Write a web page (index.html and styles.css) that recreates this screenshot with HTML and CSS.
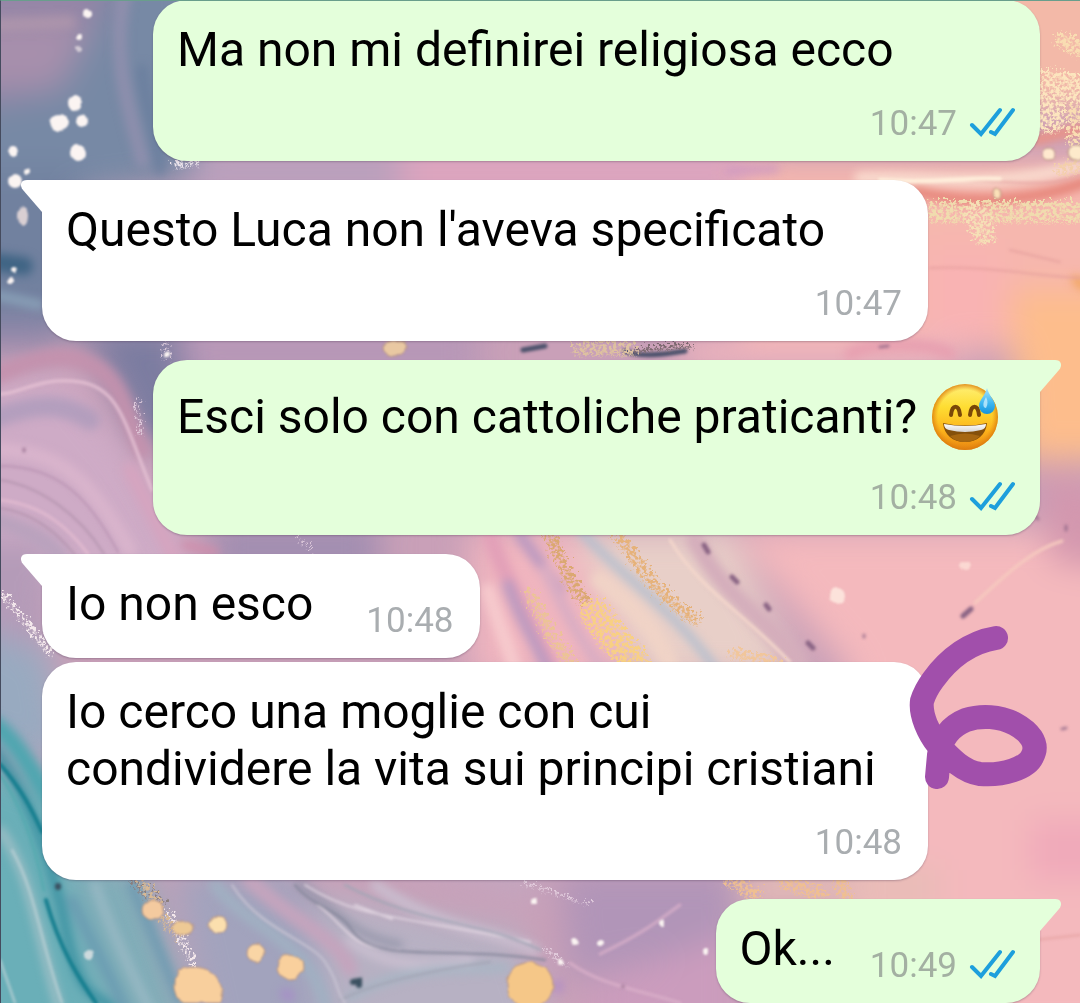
FILE: index.html
```
<!DOCTYPE html>
<html lang="it">

<head>
    <meta charset="UTF-8">
    <meta name="viewport" content="width=device-width, initial-scale=1">
    <title>Chat</title>
    <link rel="stylesheet" href="styles.css">
</head>

<body>
    <!-- marble wallpaper -->
    <svg class="wallpaper" viewBox="0 0 1080 1003" preserveAspectRatio="xMidYMid slice" color-interpolation-filters="sRGB" aria-hidden="true">
        <defs>
            <filter id="soft" x="-30%" y="-30%" width="160%" height="160%"><feGaussianBlur stdDeviation="16"/></filter>
            <filter id="mid" x="-20%" y="-20%" width="140%" height="140%"><feGaussianBlur stdDeviation="5"/></filter>
            <filter id="fine" x="-20%" y="-20%" width="140%" height="140%"><feGaussianBlur stdDeviation="1.5"/></filter>
            <filter id="glitter" x="-20%" y="-20%" width="140%" height="140%">
                <feTurbulence type="fractalNoise" baseFrequency="0.3" numOctaves="2" seed="4" result="n"/>
                <feDisplacementMap in="SourceGraphic" in2="n" scale="22" xChannelSelector="R" yChannelSelector="G" result="d"/>
                <feColorMatrix in="n" type="matrix" values="0 0 0 0 1  0 0 0 0 1  0 0 0 0 1  0 5 0 0 -1.9" result="m"/>
                <feComposite in="d" in2="m" operator="in"/>
                <feGaussianBlur stdDeviation=".6"/>
            </filter>
            <filter id="rough" x="-20%" y="-20%" width="140%" height="140%">
                <feTurbulence type="fractalNoise" baseFrequency="0.1" numOctaves="1" seed="8" result="n"/>
                <feDisplacementMap in="SourceGraphic" in2="n" scale="5" xChannelSelector="R" yChannelSelector="G"/>
                <feGaussianBlur stdDeviation=".8"/>
            </filter>
        </defs>
        <rect width="1080" height="1003" fill="#c9a0b8"/>

        <!-- colour fields -->
        <g filter="url(#soft)">
            <path fill="#9385a6" d="M-50-50H200V160H-50Z"/>
            <path fill="#a78fac" d="M-40 20H90V90H-40Z"/>
            <path fill="#7789a5" d="M-50 115L60 90 130-40H200V180L60 200-50 190Z"/>
            <path fill="#71819f" d="M-50 170H80V330H-50Z"/>
            <path fill="#8d86a8" d="M-50 315H60V350H-50Z"/>
            <path fill="#7b7ca0" d="M70 325H200L190 450 140 440 105 370Z"/>
            <path fill="#b697b7" d="M180 325H480V380H180Z"/>
            <path fill="#b8a0bd" d="M190 150H420V195H190Z"/>
            <path fill="#dfa5bf" d="M400 150H760V195H400Z"/>
            <path fill="#f3b9a8" d="M900-40H1120V110H900Z"/>
            <path fill="#f6b7ae" d="M740 160H1120V350H740Z"/>
            <path fill="#fdbd8c" d="M1010 290H1120V460H1020Z"/>
            <path fill="#f9b3b3" d="M925 250H1005V340H925Z"/>
            <path fill="#eeb4bd" d="M680 335H960V370H680Z"/>
            <path fill="#ceabc6" d="M-50 380L70 375 130 450 220 600 20 590-50 580Z"/>
            <path fill="#9d8cb0" d="M210 525H380V570H210Z"/>
            <path fill="#b49bb8" d="M-50 540H50V640H-50Z"/>
            <path fill="#f0b5bf" d="M470 530H620V680H470Z"/>
            <path fill="#e8cfc8" d="M570 530H730L800 680H640Z"/>
            <path fill="#f4b9bd" d="M730 530H1120V1040H850V670Z"/>
            <path fill="#d397ae" d="M1040 470L1110 490V570L1050 560Z"/>
            <path fill="#f0a9ba" d="M1030 820H1120V880H1030Z"/>
            <path fill="#98aac0" d="M-60 620L50 650 70 770-60 730Z"/>
            <path fill="#6aafb8" d="M-60 740L60 790 180 1050H-60Z"/>
            <path fill="#80adb8" d="M60 860H140L200 1050H120Z"/>
            <path fill="#a2a3bd" d="M170 870H300L350 1050H210Z"/>
            <path fill="#b7b1c3" d="M310 890L520 930 560 1050H330Z"/>
            <path fill="#b195b8" d="M560 870H740V940L570 980Z"/>
            <path fill="#cb9cbd" d="M740 930V1050H590V985Z"/>
            <path fill="#c3a6bf" d="M360 860H540V905Z"/>
            <path fill="#e6bdb6" d="M740 870H940V905H740Z"/>
        </g>

        <!-- broad veins -->
        <g fill="none" stroke-linecap="round" filter="url(#mid)">
            <path stroke="#9c93b2" stroke-width="14" d="M125-10C110 60 130 110 142 160" opacity=".6"/>
            <path stroke="#64799b" stroke-width="12" d="M142 70C145 110 160 140 160 170" opacity=".6"/>
            <path stroke="#b39aad" stroke-width="12" d="M-5 25L70 22" opacity=".7"/>
            <path stroke="#3f6484" stroke-width="18" d="M-5 262L24 266"/>
            <path stroke="#8ca5bb" stroke-width="8" d="M-5 295L40 305"/>
            <path stroke="#c491ad" stroke-width="18" d="M-5 376C30 360 60 350 90 364S125 410 142 450" opacity=".9"/>
            <path stroke="#ad9bbb" stroke-width="20" d="M-5 418C30 405 60 400 90 420" opacity=".8"/>
            <path stroke="#d9b4cc" stroke-width="14" d="M-5 450C60 450 90 480 130 550"/>
            <path stroke="#d5a4bf" stroke-width="14" d="M130 470L175 560"/>
            <path stroke="#d08ca9" stroke-width="8" d="M185 545L215 552"/>
            <path stroke="#b9a2bd" stroke-width="16" d="M-5 520C30 530 50 545 60 556"/>
            <path stroke="#e2a0b8" stroke-width="16" d="M490 535C505 580 530 620 550 665"/>
            <path stroke="#bc9ac0" stroke-width="12" d="M508 585C520 620 535 640 548 670M520 535L560 590"/>
            <path stroke="#d9adc3" stroke-width="12" d="M545 570C565 610 580 640 600 665"/>
            <path stroke="#f6cacd" stroke-width="14" d="M488 590C500 630 510 650 515 670"/>
            <path stroke="#b6bfce" stroke-width="9" d="M580 530C620 575 670 605 715 668"/>
            <path stroke="#f0d3c6" stroke-width="18" d="M600 580C640 610 660 640 670 665"/>
            <path stroke="#d4adbb" stroke-width="18" d="M695 540C725 600 775 625 800 665"/>
            <path stroke="#f9dccf" stroke-width="12" d="M860 178C930 175 990 190 1080 166"/>
            <path stroke="#e37c70" stroke-width="9" d="M915 191C970 206 1040 200 1085 182"/>
            <path stroke="#ed9080" stroke-width="10" d="M1035 140L1085 128"/>
            <path stroke="#efa253" stroke-width="8" d="M1076 280L1084 286"/>
            <path stroke="#c491c6" stroke-width="8" d="M730 171L775 169" opacity=".7"/>
            <path stroke="#e79fb0" stroke-width="12" d="M850 354C870 342 930 342 950 354"/>
            <path stroke="#4fa6b0" stroke-width="18" d="M-5 725C20 745 30 770 50 800"/>
            <path stroke="#368fa0" stroke-width="8" d="M-5 750C20 780 50 850 66 930S100 990 112 1010"/>
            <path stroke="#a3c0c7" stroke-width="8" d="M0 830C30 870 36 930 60 1010"/>
            <path stroke="#a4bfca" stroke-width="9" d="M95 885C110 930 135 980 150 1010" opacity=".7"/>
            <path stroke="#6797b0" stroke-width="10" d="M72 900C90 940 115 985 125 1010M132 885L180 1000" opacity=".8"/>
            <path stroke="#a0b0c2" stroke-width="12" d="M215 885C250 930 310 940 325 1005"/>
            <path stroke="#c4a4bd" stroke-width="16" d="M250 880C290 920 335 935 350 968"/>
            <path stroke="#8d90a4" stroke-width="6" d="M300 885C350 920 350 935 400 945"/>
            <path stroke="#cabfd0" stroke-width="10" d="M375 885C440 930 490 930 535 950M350 940C390 970 430 966 470 960"/>
            <path stroke="#a9b5c4" stroke-width="10" d="M350 998C400 965 460 970 505 968"/>
            <path stroke="#aa85cc" stroke-width="10" d="M558 985V988M285 994L290 996" opacity=".7"/>
        </g>

        <!-- thin veins -->
        <g fill="none" stroke-linecap="round" filter="url(#fine)">
            <path stroke="#e3bfd2" stroke-width="3" d="M0 394C20 394 40 376 80 382S125 425 152 490"/>
            <path stroke="#b791b0" stroke-width="2" d="M0 466C60 466 90 500 118 552" opacity=".8"/>
            <path stroke="#b091ab" stroke-width="2" d="M0 480C40 486 80 515 104 554M0 508C30 512 55 530 75 555" opacity=".8"/>
            <path stroke="#e0b9cf" stroke-width="3" d="M0 500C45 505 70 530 88 554"/>
            <path stroke="#147d8e" stroke-width="4" d="M0 764C22 790 32 810 42 832M46 900C60 950 80 980 96 1003"/>
            <path stroke="#57aab0" stroke-width="3" d="M0 775C25 810 38 860 44 890"/>
            <path stroke="#bdd2d6" stroke-width="2" d="M12 850C35 890 40 940 62 1003M0 960L15 1003"/>
            <path stroke="#dfd3df" stroke-width="2" d="M305 885C360 920 400 915 530 942M355 905L392 919M318 905C350 930 350 950 400 950"/>
            <path stroke="#85869a" stroke-width="2" d="M295 885C310 905 340 910 352 930C375 965 450 945 545 960"/>
            <path stroke="#a3a5b5" stroke-width="2" d="M345 885C420 925 480 920 540 950M340 1000C370 985 420 972 490 962"/>
            <path stroke="#c9c4d3" stroke-width="2" d="M232 885C260 930 310 940 325 962S335 990 345 1003"/>
            <path stroke="#dcb2ca" stroke-width="3" d="M600 954C650 930 665 915 680 905M570 963C600 985 640 990 680 1003" opacity=".8"/>
            <path stroke="#f3d6cb" stroke-width="3" d="M670 540C700 590 740 610 790 662"/>
            <path stroke="#f6cabf" stroke-width="3" d="M1062 541C1030 550 1000 580 975 603"/>
            <path stroke="#e39c9b" stroke-width="2" d="M930 268C980 265 1030 275 1080 278M1010 250L1060 262M1035 940L1080 935M960 180C1020 182 1050 188 1080 175" opacity=".7"/>
            <path stroke="#fff0dc" stroke-width="4" d="M880 180C940 184 960 177 1000 179"/>
            <path stroke="#4b516b" stroke-width="5" d="M523 350L545 346M625 351C640 357 660 355 685 351"/>
        </g>

        <!-- gold and silver glitter -->
        <g fill="none" stroke-linecap="round" filter="url(#glitter)">
            <path stroke="#dba871" stroke-width="12" d="M550 533C560 570 580 600 620 650L645 668"/>
            <path stroke="#f8d083" stroke-width="30" d="M595 615L640 672"/>
            <path stroke="#e6b27a" stroke-width="12" d="M615 533C640 565 660 600 695 620"/>
            <path stroke="#ecc396" stroke-width="12" d="M530 595C545 630 560 650 575 668"/>
            <path stroke="#f1c69b" stroke-width="12" d="M735 655L775 664"/>
            <path stroke="#f0dcae" stroke-width="20" d="M935 212H1080M935 214H1080"/>
            <path stroke="#f5e0b6" stroke-width="24" d="M975 216L985 235"/>
            <path stroke="#fce5be" stroke-width="30" d="M1052 85L1080 92M1050 105V120"/>
            <path stroke="#f9ddb2" stroke-width="18" d="M1064 42L1080 50M1075 115V140"/>
            <path stroke="#f3cfab" stroke-width="14" d="M1062 170L1080 168"/>
            <path stroke="#dec1a0" stroke-width="14" d="M580 350H630"/>
            <path stroke="#7d6a70" stroke-width="6" d="M640 351L690 347"/>
            <path stroke="#efbf91" stroke-width="13" d="M730 882L755 895M785 884L820 896M840 884L845 896"/>
            <path stroke="#8b7e7e" stroke-width="12" d="M135 880L160 905"/>
            <path stroke="#d8b994" stroke-width="8" d="M140 880L160 910M165 920L180 940"/>
            <path stroke="#f4e8ec" stroke-width="6" d="M2 595L20 615 50 655M170 915L195 970"/>
            <path stroke="#ece4ec" stroke-width="9" d="M178 165L195 162"/>
            <path stroke="#e9d5e4" stroke-width="3" d="M138 400L140 435M166 345V360M300 538L310 552M545 950L565 965M525 885L590 905" opacity=".8"/>
        </g>

        <!-- gold drops -->
        <g filter="url(#rough)" stroke="#b7937f" stroke-width="1">
            <ellipse cx="153" cy="910" rx="11" ry="10" fill="#f4ca9f"/>
            <ellipse cx="183" cy="928" rx="10" ry="7" fill="#edc995"/>
            <circle cx="218" cy="925" r="9" fill="#fbdfae"/>
            <circle cx="256" cy="953" r="9" fill="#f9d5a5"/>
            <circle cx="290" cy="967" r="13" fill="#f9d09d"/>
            <path fill="#f8cf9d" d="M178 970Q200 962 214 975 226 990 221 1003H182Q170 990 178 970Z"/>
            <circle cx="530" cy="985" r="23" fill="#f5c788"/>
            <ellipse cx="395" cy="348" rx="12" ry="8" fill="#e9c8a2"/>
            <circle cx="1049" cy="154" r="6" fill="#ffe9cf"/>
            <circle cx="997" cy="194" r="5" fill="#fbe0b8"/>
            <circle cx="1076" cy="153" r="8" fill="#fdeacb"/>
        </g>

        <!-- pale drops -->
        <g fill="#fbf4f2" filter="url(#rough)">
            <ellipse cx="75" cy="103" rx="7" ry="8"/>
            <ellipse cx="59" cy="123" rx="10" ry="8"/>
            <circle cx="82" cy="121" r="6"/>
            <circle cx="78" cy="153" r="8"/>
            <circle cx="13" cy="152" r="5"/>
            <circle cx="15" cy="181" r="7"/>
            <circle cx="27" cy="171" r="3"/>
            <ellipse cx="23" cy="216" rx="5" ry="9" fill="#d9cfd3"/>
            <circle cx="87" cy="14" r="4"/>
            <circle cx="79" cy="37" r="3"/>
            <circle cx="79" cy="49" r="3" opacity=".6"/>
            <circle cx="14" cy="269" r="3"/>
            <circle cx="11" cy="281" r="3"/>
            <circle cx="837" cy="596" r="8" fill="#fce2db"/>
            <circle cx="965" cy="566" r="5" fill="#fbd8d2"/>
            <circle cx="89" cy="955" r="5" fill="#cddadd"/>
            <circle cx="168" cy="354" r="3"/>
            <circle cx="575" cy="941" r="3"/>
            <circle cx="601" cy="943" r="3"/>
            <circle cx="662" cy="923" r="3"/>
            <circle cx="534" cy="901" r="3"/>
            <circle cx="705" cy="951" r="3"/>
            <circle cx="560" cy="962" r="3"/>
        </g>

        <!-- dark flecks -->
        <g fill="none" stroke="#8a6484" stroke-width="5" stroke-linecap="round" filter="url(#fine)">
            <path d="M732 577L737 582M766 605L769 609M808 643L813 648M963 616L971 609M704 545L708 552"/>
            <path stroke-width="3" opacity=".7" d="M864 635V637M1066 526V530M1036 517L1038 519M24 449V451M623 986V987M880 347L888 346M1062 729L1066 728"/>
            <path stroke="#3a5060" stroke-width="6" d="M58 886V887M353 982L359 981V985"/>
        </g>
    </svg>

    <!-- shared icons -->
    <svg class="defs" aria-hidden="true">
        <symbol id="ticks" viewBox="0 0 46 30">
            <g fill="none" stroke="#1d9fdc" stroke-width="4">
                <path stroke-linecap="round" d="M3 18L12 27 31 3"/>
                <path stroke-linecap="round" d="M22 25L26 27 44 3"/>
            </g>
        </symbol>
    </svg>

    <main class="chat">
        <article class="bubble sent wide">
            <p class="text">Ma non mi definirei religiosa ecco</p>
            <div class="meta">
                <time>10:47</time>
                <svg class="ticks" role="img" aria-label="Letto"><use href="#ticks"/></svg>
            </div>
        </article>

        <article class="bubble received tail wide">
            <p class="text">Questo Luca non l'aveva specificato</p>
            <div class="meta"><time>10:47</time></div>
        </article>

        <article class="bubble sent tail wide">
            <p class="text">Esci solo con cattoliche praticanti?
                <svg class="emoji" viewBox="0 0 70 71" role="img" aria-label="Faccina che ride sudando">
                    <defs>
                        <linearGradient id="skin" x1="0" y1="0" x2="0" y2="1">
                            <stop offset="0" stop-color="#fff07a"/>
                            <stop offset=".35" stop-color="#fedd32"/>
                            <stop offset=".7" stop-color="#fdb41c"/>
                            <stop offset="1" stop-color="#e88512"/>
                        </linearGradient>
                        <radialGradient id="rim">
                            <stop offset=".82" stop-color="#e58a12" stop-opacity="0"/>
                            <stop offset="1" stop-color="#d9780e" stop-opacity=".8"/>
                        </radialGradient>
                        <linearGradient id="drop" x1="0" y1="0" x2="0" y2="1">
                            <stop offset="0" stop-color="#a9e4fb"/>
                            <stop offset=".6" stop-color="#3cb5f0"/>
                            <stop offset="1" stop-color="#1593dc"/>
                        </linearGradient>
                        <linearGradient id="teeth" x1="0" y1="0" x2="0" y2="1">
                            <stop offset="0" stop-color="#fff"/>
                            <stop offset="1" stop-color="#d6d3d0"/>
                        </linearGradient>
                    </defs>
                    <circle cx="36" cy="36" r="33" fill="url(#skin)"/>
                    <circle cx="36" cy="36" r="33" fill="url(#rim)"/>
                    <path d="M22 34C23 23 30 23 31 34M41 34C42 23 49 23 50 34" fill="none" stroke="#7a4708" stroke-width="4" stroke-linecap="round"/>
                    <path fill="#84500b" d="M14 42Q36 47 58 42C57 54 48 61 36 61S15 54 14 42Z"/>
                    <path fill="#a76711" d="M21 55Q36 50 51 55Q45 61 36 61T21 55Z"/>
                    <path fill="url(#teeth)" d="M15 43Q36 47 57 43 57 48 52 49 36 53 20 49 15 48 15 43Z"/>
                    <path fill="url(#drop)" d="M58 7C60 15 66 19 66 25A8 8 0 0 1 50 25C50 19 56 15 58 7Z"/>
                    <path fill="#c6ecfc" opacity=".8" d="M57 16C59 20 59 23 57 27 54 27 53 23 57 16Z"/>
                </svg>
            </p>
            <div class="meta">
                <time>10:48</time>
                <svg class="ticks" role="img" aria-label="Letto"><use href="#ticks"/></svg>
            </div>
        </article>

        <article class="bubble received tail short">
            <p class="text">Io non esco</p>
            <div class="meta"><time>10:48</time></div>
        </article>

        <article class="bubble received wide next">
            <p class="text">Io cerco una moglie con cui condividere la vita sui principi cristiani</p>
            <div class="meta"><time>10:48</time></div>
            <svg class="mark" viewBox="0 0 138 164" role="img" aria-label="6">
                <path d="M87 13C62 17 40 33 24 55Q16 66 13 76C11 90 20 109 29 120 42 134 55 147 71 149 94 151 118 143 123 132 131 118 119 106 106 99 91 91 72 90 57 95 42 101 32 113 30 130L28 152"/>
            </svg>
        </article>

        <article class="bubble sent tail short">
            <p class="text">Ok...</p>
            <div class="meta">
                <time>10:49</time>
                <svg class="ticks" role="img" aria-label="Letto"><use href="#ticks"/></svg>
            </div>
        </article>
    </main>
</body>

</html>
```
FILE: styles.css
```
* {
    padding: 0;
    margin: 0;
    box-sizing: border-box;
}

body {
    background: #c9a0b8;
    font-family: Roboto, "Liberation Sans", sans-serif;
    color: #000;
}

.wallpaper {
    position: fixed;
    top: 0;
    left: 0;
    width: 100%;
    height: 100%;
}

.defs {
    position: absolute;
    width: 0;
    height: 0;
}

.chat {
    position: relative;
    display: flex;
    flex-direction: column;
    padding: 0 40px 0 42px;
    overflow: hidden;
}

/* thin frame on the top and left edges */
.chat:before {
    content: '';
    position: absolute;
    z-index: 1;
    top: 0;
    right: 0;
    bottom: 0;
    left: 0;
    border-top: 1px solid #699e8c;
    border-left: 1px solid #454b5e;
    pointer-events: none;
}

.bubble {
    position: relative;
    display: flex;
    padding: 21px 26px 16px 24px;
    margin-top: 19px;
    border-radius: 34px;
    box-shadow: 0 1px 2px rgba(60, 40, 70, .3);
}

.bubble:first-child {
    margin-top: 0;
}

.bubble.next {
    margin-top: 4px;
}

.sent {
    background: #e4ffdb;
}

.received {
    background: #fff;
}

.wide {
    flex-direction: column;
    gap: 15px;
}

.sent.wide {
    margin-left: 111px;
}

.received.wide {
    margin-right: 112px;
}

.short {
    align-items: flex-end;
}

.sent.short {
    align-self: flex-end;
    gap: 35px;
}

.received.short {
    align-self: flex-start;
    gap: 53px;
}

.sent.tail {
    border-top-right-radius: 0;
}

.received.tail {
    border-top-left-radius: 0;
}

.tail:before {
    content: '';
    position: absolute;
    top: 0;
    width: 22px;
    height: 32px;
    background: inherit;
}

.sent.tail:before {
    left: 100%;
    margin-left: -1px;
    clip-path: path("M0 0H16C22 0 24 5 20 10L1 32H0Z");
}

.received.tail:before {
    right: 100%;
    margin-right: -1px;
    clip-path: path("M22 0H6C0 0 -2 5 2 10L21 32H22Z");
}

.text {
    padding-bottom: 10px;
    font-size: 48px;
    line-height: 57px;
}

.emoji {
    width: 70px;
    height: 71px;
    vertical-align: -19px;
}

.meta {
    display: flex;
    justify-content: flex-end;
    align-items: center;
    gap: 12px;
    font-size: 35px;
    line-height: 42px;
    color: #a9adb0;
}

.sent .meta {
    color: #a3b0a2;
}

.ticks {
    width: 46px;
    height: 30px;
    margin: 0 -1px 5px 0;
}

/* hand-drawn number over the corner of the bubble */
.mark {
    position: absolute;
    top: -37px;
    right: -119px;
    width: 138px;
    height: 164px;
}

.mark path {
    fill: none;
    stroke: #a14fab;
    stroke-width: 24px;
    stroke-linecap: round;
    stroke-linejoin: round;
}
```
